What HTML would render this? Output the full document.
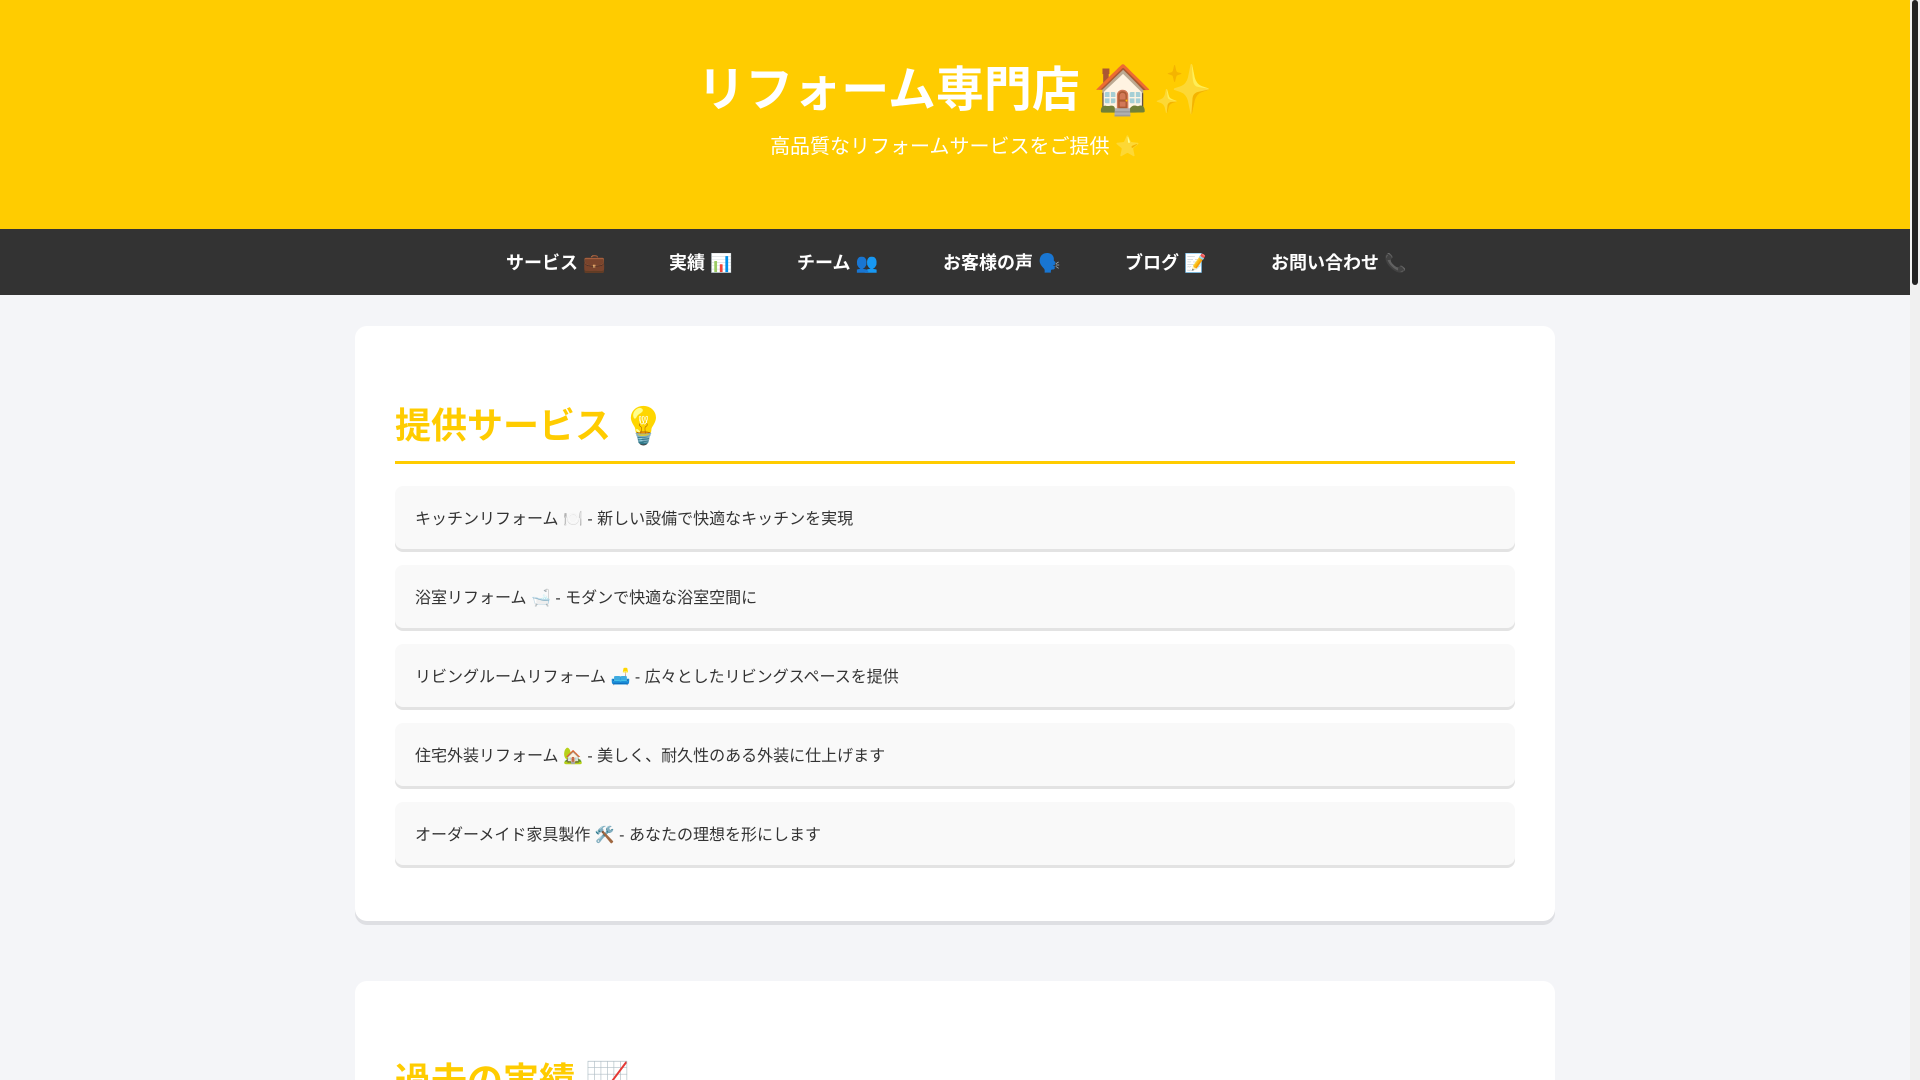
<!DOCTYPE html>
<html><head><meta charset="utf-8"><style>
*{margin:0;padding:0;box-sizing:border-box}
html,body{width:1920px;height:1080px;overflow:hidden}
body{background:#f4f5f8;font-family:"Liberation Sans","Noto Sans CJK JP",sans-serif;position:relative}
.sb{position:absolute;right:0;top:0;width:10px;height:1080px;background:#f0f0f0}
.sb i{position:absolute;left:2px;top:0;width:6px;height:285px;background:#222;border-radius:3px}
.wrap{width:1910px;height:1080px;position:relative;overflow:hidden}
header{background:#ffcc00;height:229px;text-align:center;color:#fff}
header h1{position:absolute;top:59px;left:0;width:1910px;font-size:48px;font-weight:bold;line-height:64px}
header p{position:absolute;top:133px;left:0;width:1910px;font-size:20px;line-height:28px}
nav{position:absolute;top:229px;left:0;width:1910px;height:66px;background:#333}
nav a{position:absolute;top:1px;line-height:66px;color:#fff;font-weight:bold;font-size:18px;white-space:nowrap;text-decoration:none}
.card{position:absolute;left:355px;width:1200px;background:#fff;border-radius:12px;box-shadow:0 4px 0 #dedfe3;padding:0 40px}
h2{color:#ffcc00;font-size:36px;font-weight:bold;position:absolute;left:40px;white-space:nowrap;line-height:50px}
.line{position:absolute;left:40px;right:40px;height:3px;background:#ffcc00}
.item{position:absolute;left:40px;right:40px;height:63px;background:#f9f9f9;border-radius:8px;box-shadow:0 3px 0 #e3e3e3;font-size:16px;color:#333;line-height:63px;padding:2px 0 0 20px}
</style></head><body>
<div class="wrap">
<header><h1>リフォーム専門店 🏠✨</h1><p>高品質なリフォームサービスをご提供 ⭐</p></header>
<nav>
<a style="left:506px">サービス 💼</a>
<a style="left:669px">実績 📊</a>
<a style="left:797px">チーム 👥</a>
<a style="left:943px">お客様の声 🗣️</a>
<a style="left:1125px">ブログ 📝</a>
<a style="left:1271px">お問い合わせ 📞</a>
</nav>
<div class="card" style="top:326px;height:595px">
<h2 style="top:75px">提供サービス 💡</h2>
<div class="line" style="top:135px"></div>
<div class="item" style="top:160px">キッチンリフォーム 🍽️ - 新しい設備で快適なキッチンを実現</div>
<div class="item" style="top:239px">浴室リフォーム 🛁 - モダンで快適な浴室空間に</div>
<div class="item" style="top:318px">リビングルームリフォーム 🛋️ - 広々としたリビングスペースを提供</div>
<div class="item" style="top:397px">住宅外装リフォーム 🏡 - 美しく、耐久性のある外装に仕上げます</div>
<div class="item" style="top:476px">オーダーメイド家具製作 🛠️ - あなたの理想を形にします</div>
</div>
<div class="card" style="top:981px;height:200px">
<h2 style="top:75px">過去の実績 📈</h2>
</div>
</div>
<div class="sb"><i></i></div>
</body></html>
